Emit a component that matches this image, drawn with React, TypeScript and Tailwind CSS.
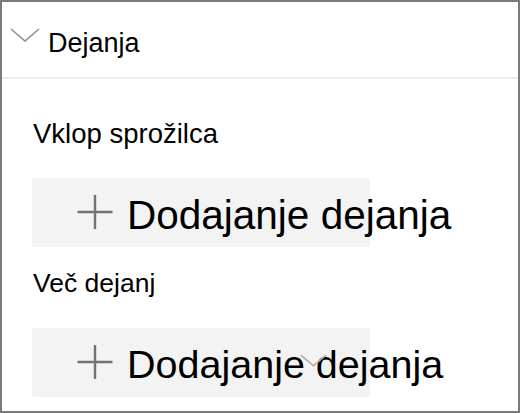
import React from 'react';

const font = { fontFamily: '"Liberation Sans", Arial, sans-serif' };

const Chevron: React.FC<{ className?: string; color?: string }> = ({ className, color = '#8f8f8f' }) => (
  <svg viewBox="0 0 30 14" className={className} fill="none">
    <polyline points="1,1 15,13 29,1" stroke={color} strokeWidth="1.6" />
  </svg>
);

const Plus: React.FC = () => (
  <svg viewBox="0 0 36 36" className="mt-[17px] h-[35px] w-[36px] shrink-0" fill="none">
    <line x1="18" y1="0" x2="18" y2="35" stroke="#727272" strokeWidth="2.5" />
    <line x1="0" y1="17.5" x2="36" y2="17.5" stroke="#727272" strokeWidth="2.5" />
  </svg>
);

interface AddButtonProps {
  size: string;
  overlay?: boolean;
}

const AddButton: React.FC<AddButtonProps> = ({ size, overlay }) => (
  <div className="relative ml-[30px] flex h-[69px] w-[338px] items-start rounded-[3px] bg-[#f3f3f3] pl-[45px]">
    <Plus />
    <span className={`ml-[14px] mt-[17px] whitespace-nowrap leading-none text-black ${size}`}>
      Dodajanje dejanja
    </span>
    {overlay && <Chevron className="absolute left-[268px] top-[26px] h-[13px] w-[27px]" color="#a8a8a8" />}
  </div>
);

export default function App() {
  return (
    <div style={font} className="h-[413px] w-[520px] overflow-hidden border-2 border-[#7a7a7a] bg-white">
      <div className="flex h-[77px] items-start border-b-2 border-[#ececec]">
        <Chevron className="ml-[8px] mt-[26px] h-[14px] w-[30px]" />
        <span className="ml-[8px] mt-[28px] text-[27px] leading-none text-black">Dejanja</span>
      </div>
      <div className="flex flex-col">
        <span className="ml-[31px] mt-[41px] text-[27.5px] leading-none text-black">Vklop sprožilca</span>
        <div className="mt-[30px]">
          <AddButton size="text-[40.5px]" />
        </div>
        <span className="ml-[31px] mt-[23px] text-[26.5px] leading-none text-black">Več dejanj</span>
        <div className="mt-[32px]">
          <AddButton size="text-[39.5px]" overlay />
        </div>
      </div>
    </div>
  );
}
